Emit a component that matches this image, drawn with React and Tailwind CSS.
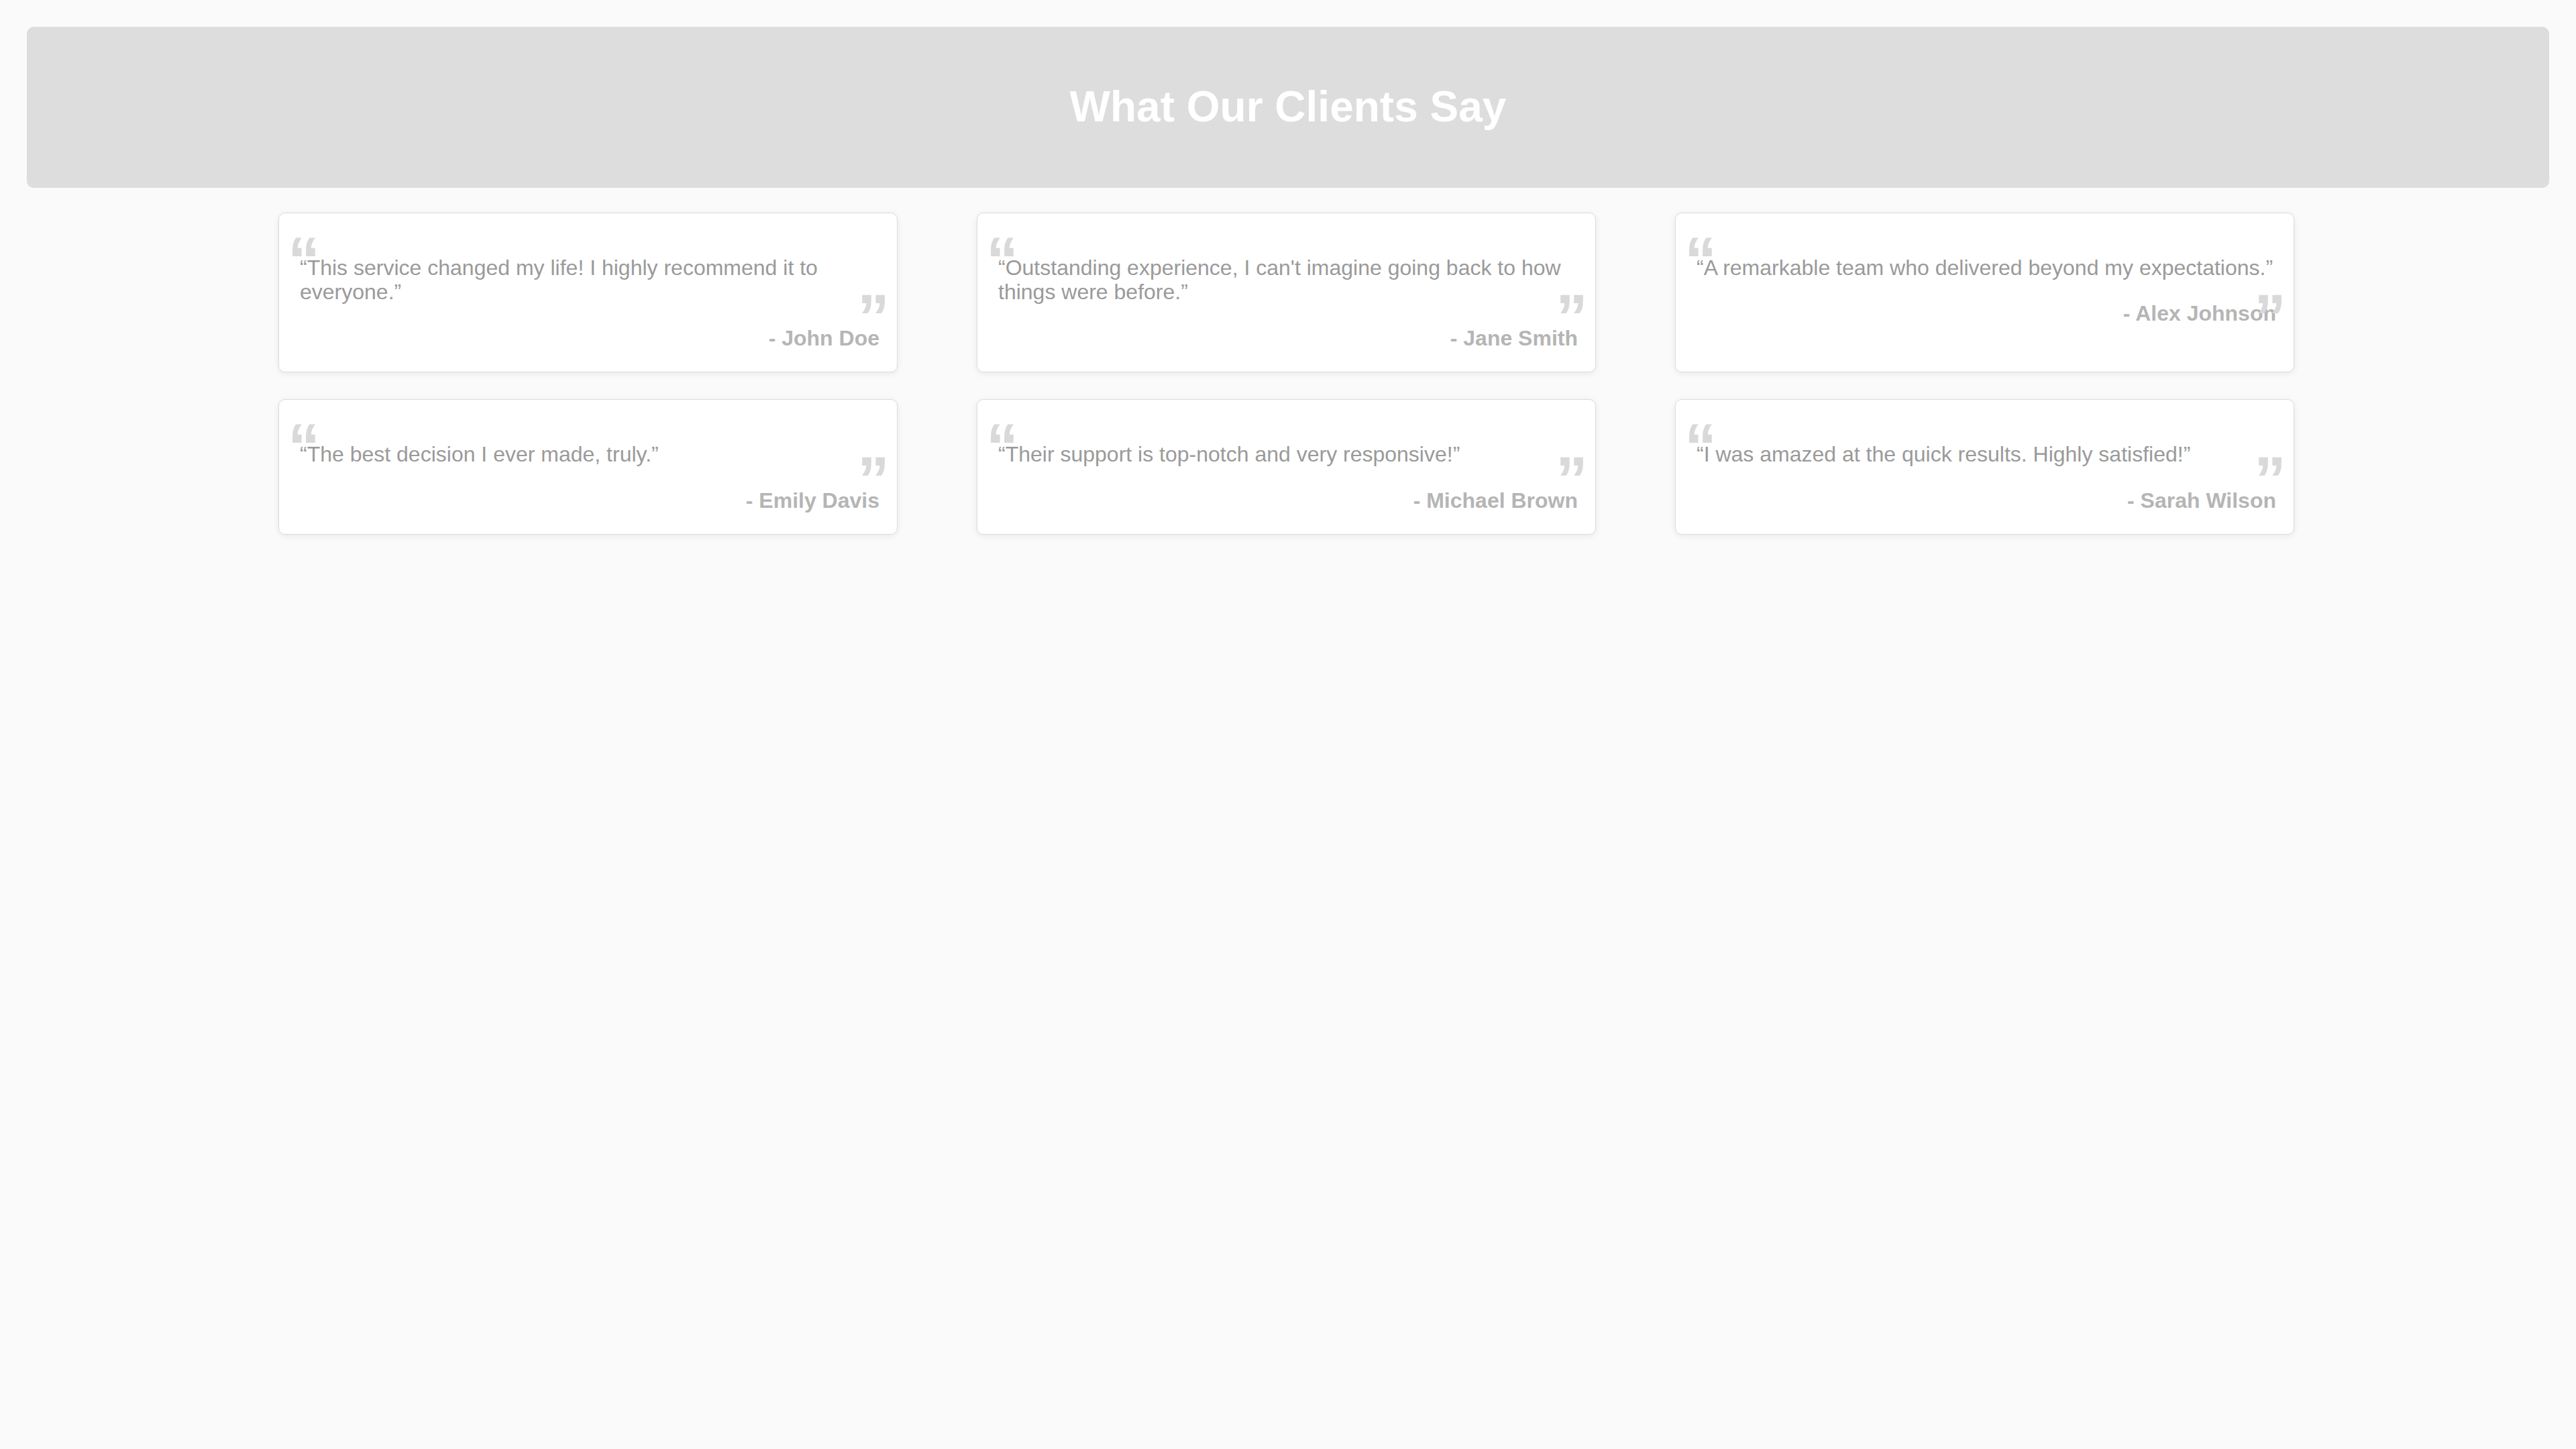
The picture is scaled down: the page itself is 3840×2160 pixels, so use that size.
const testimonials = [
  { text: "“This service changed my life! I highly recommend it to everyone.”", author: "- John Doe" },
  { text: "“Outstanding experience, I can't imagine going back to how things were before.”", author: "- Jane Smith" },
  { text: "“A remarkable team who delivered beyond my expectations.”", author: "- Alex Johnson" },
  { text: "“The best decision I ever made, truly.”", author: "- Emily Davis" },
  { text: "“Their support is top-notch and very responsive!”", author: "- Michael Brown" },
  { text: "“I was amazed at the quick results. Highly satisfied!”", author: "- Sarah Wilson" },
];

function Card({ text, author }) {
  return (
    <div className="relative bg-white border border-[#dcdcdc] rounded-[10px] pl-[31px] pr-[26px] py-[31px] shadow-[0_2px_10px_rgba(0,0,0,0.08)]">
      <span className="absolute left-[13px] top-[22px] text-[96px] leading-none font-bold text-[#d9d9d9] select-none">“</span>
      <p className="relative my-[32px] text-[32px] leading-[1.15] text-[#9a9a9a]">{text}</p>
      <div className="relative text-right text-[32px] leading-[1.15] font-bold text-[#b5b5b5]">{author}</div>
      <span className="absolute right-[11px] bottom-[65px] h-[64px] text-[96px] leading-none font-bold text-[#d9d9d9] select-none">”</span>
    </div>
  );
}

export default function App() {
  return (
    <div className="min-h-[2160px] bg-[#fafafa] p-[40px] font-['Liberation_Sans',Arial,sans-serif]">
      <header className="bg-[#dddddd] rounded-[10px] py-[40px] text-center">
        <h1 className="my-[43px] text-[64px] leading-[1.15] font-bold text-white">What Our Clients Say</h1>
      </header>
      <div className="mt-[37px] pr-[5px] grid grid-cols-[repeat(3,923px)] justify-center gap-x-[118px] gap-y-[40px]">
        {testimonials.map((t) => (
          <Card key={t.author} {...t} />
        ))}
      </div>
    </div>
  );
}
